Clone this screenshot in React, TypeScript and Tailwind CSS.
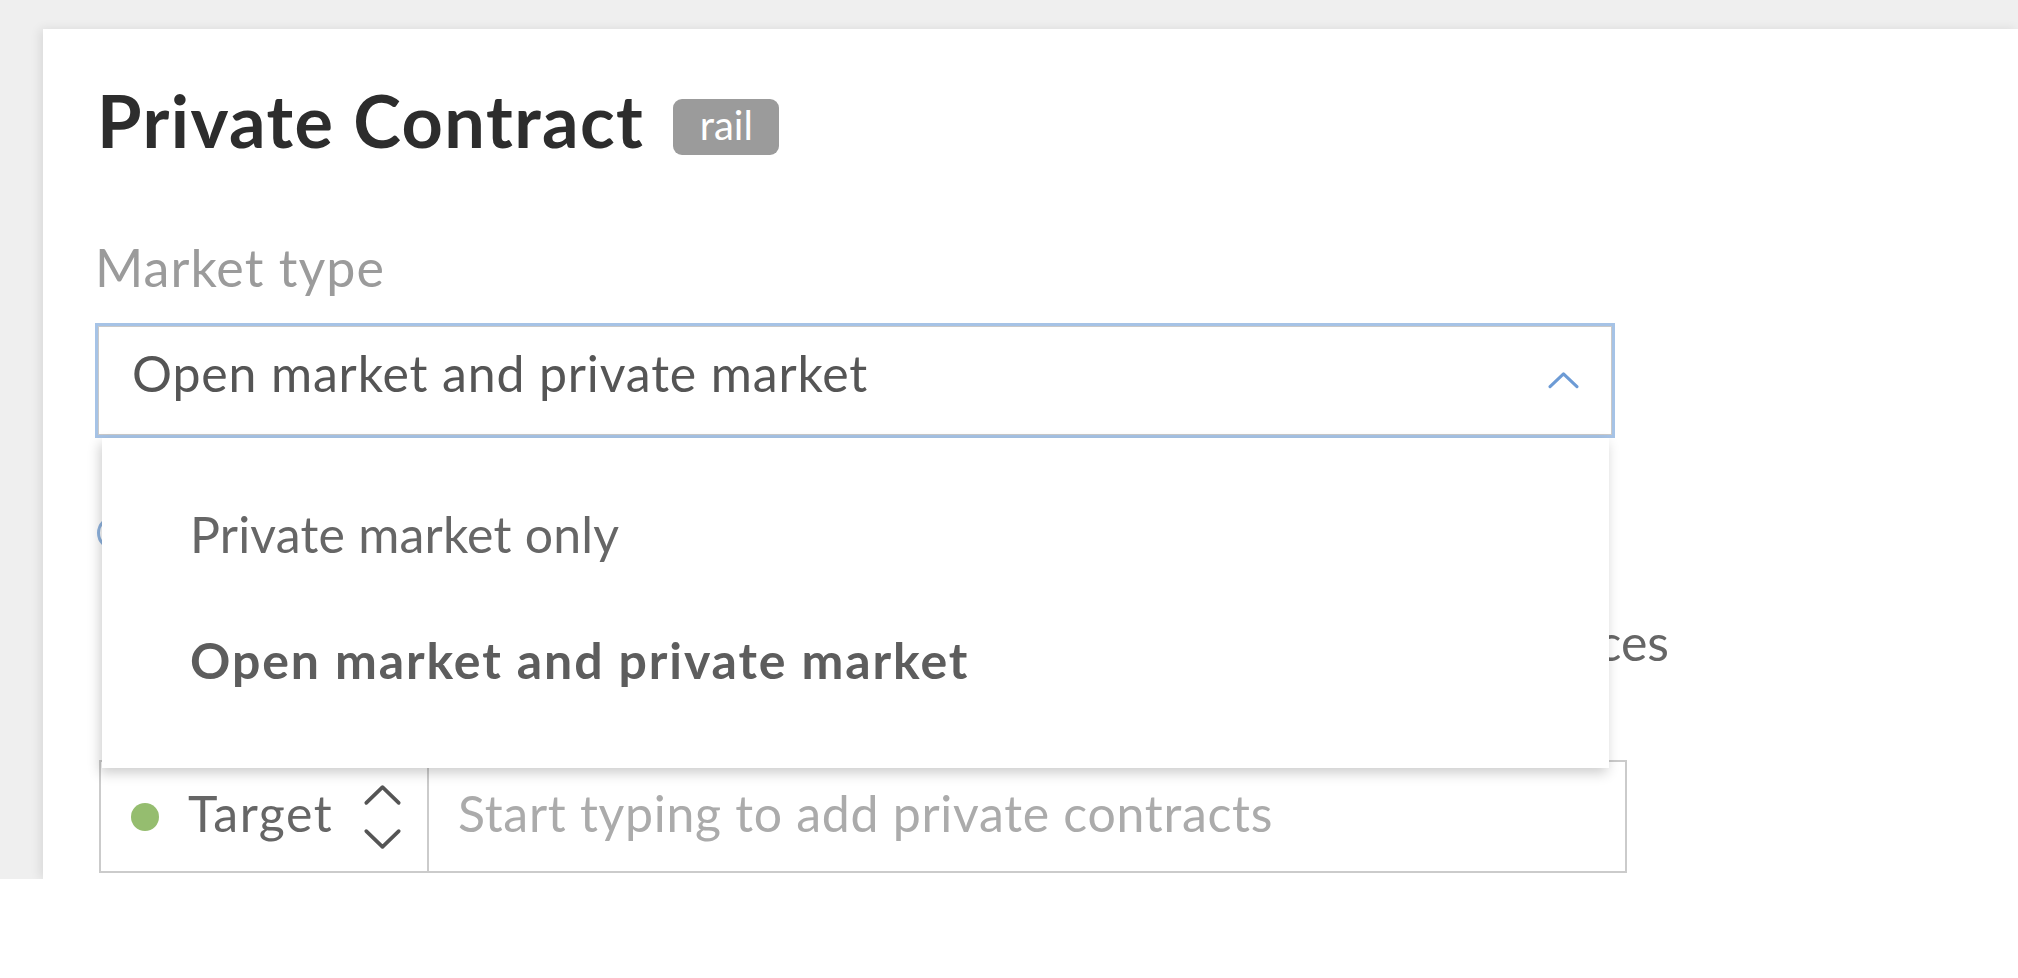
const ChevronUp = ({ className }: { className?: string }) => (
  <svg viewBox="0 0 30 17" className={className} fill="none" stroke="currentColor" strokeWidth={3} strokeLinecap="round" strokeLinejoin="round">
    <path d="M2 15 L15 2.5 L28 15" />
  </svg>
);

const ChevronDown = ({ className }: { className?: string }) => (
  <svg viewBox="0 0 37 21" className={className} fill="none" stroke="currentColor" strokeWidth={3.5} strokeLinecap="round" strokeLinejoin="round">
    <path d="M3 3 L18.5 18 L34 3" />
  </svg>
);

const options = [
  { label: 'Private market only', selected: false },
  { label: 'Open market and private market', selected: true },
];

const App = () => {
  return (
    <div className="w-full h-[978px] bg-white font-['Lato','Liberation_Sans',sans-serif]">
      <div className="h-[879px] bg-[#efefef] pt-[29px] pl-[43px] overflow-hidden">
        <div className="h-full bg-white pl-[52px] pt-[55px] shadow-[-3px_0_10px_rgba(0,0,0,0.09)]">
          <section className="flex items-center ml-[2px]">
            <h1 className="text-[72px] leading-none font-bold tracking-[0.02em] text-[#2d2d2d]">Private Contract</h1>
            <span className="ml-[29px] mt-[14px] w-[106px] h-[56px] rounded-[9px] bg-[#9b9b9b] text-white text-[40px] leading-none flex items-center justify-center pb-[4px]">
              rail
            </span>
          </section>

          <p className="mt-[85px] text-[52px] leading-none tracking-[0.02em] text-[#9b9b9b]">Market type</p>

          <div className="relative mt-[30px] w-[1520px]">
            <div className="h-[115px] border-[3px] border-[#a6c3e6] shadow-[inset_0_0_0_1px_#c9c9c9] flex items-start justify-between pl-[34px] pr-[33px]">
              <span className="mt-[22px] text-[50px] leading-none tracking-[0.017em] text-[#555]">Open market and private market</span>
              <ChevronUp className="mt-[45px] w-[31px] h-[18px] text-[#6d9bd5]" />
            </div>

            <ul className="absolute z-10 top-full left-[7px] right-[6px] h-[330px] bg-white pt-[33px] shadow-[-2px_5px_12px_rgba(0,0,0,0.2)]">
              {options.map((option) => (
                <li
                  key={option.label}
                  className={
                    option.selected
                      ? 'h-[126px] flex items-center pl-[88px] text-[50px] leading-none font-bold tracking-[0.038em] text-[#5d5d5d]'
                      : 'h-[126px] flex items-center pl-[88px] text-[50px] leading-none tracking-[0.004em] text-[#666]'
                  }
                >
                  {option.label}
                </li>
              ))}
            </ul>
          </div>

          <div className="mt-[78px] ml-[2px] flex items-center h-[34px]">
            <span className="w-[34px] h-[34px] rounded-full border-[3px] border-[#8fb3df]" />
          </div>

          <p className="mt-[67px] w-[1574px] text-right text-[50px] leading-none text-[#666]">prices</p>

          <div className="mt-[93px] ml-[4px] w-[1528px] h-[113px] border-2 border-[#cbcbcb] flex items-stretch">
            <div className="w-[328px] flex items-center pl-[30px] border-r-2 border-[#cbcbcb]">
              <span className="w-[28px] h-[28px] rounded-full bg-[#95bd6f]" />
              <span className="ml-[29px] mb-[8px] text-[50px] leading-none tracking-[0.03em] text-[#666]">Target</span>
              <div className="ml-[30px] flex flex-col gap-[22px] text-[#555]">
                <ChevronDown className="w-[39px] h-[22px] rotate-180" />
                <ChevronDown className="w-[39px] h-[22px]" />
              </div>
            </div>
            <div className="flex items-center pl-[29px]">
              <span className="mb-[8px] text-[50px] leading-none tracking-[0.014em] text-[#ababab]">Start typing to add private contracts</span>
            </div>
          </div>
        </div>
      </div>
    </div>
  );
};

export default App;
